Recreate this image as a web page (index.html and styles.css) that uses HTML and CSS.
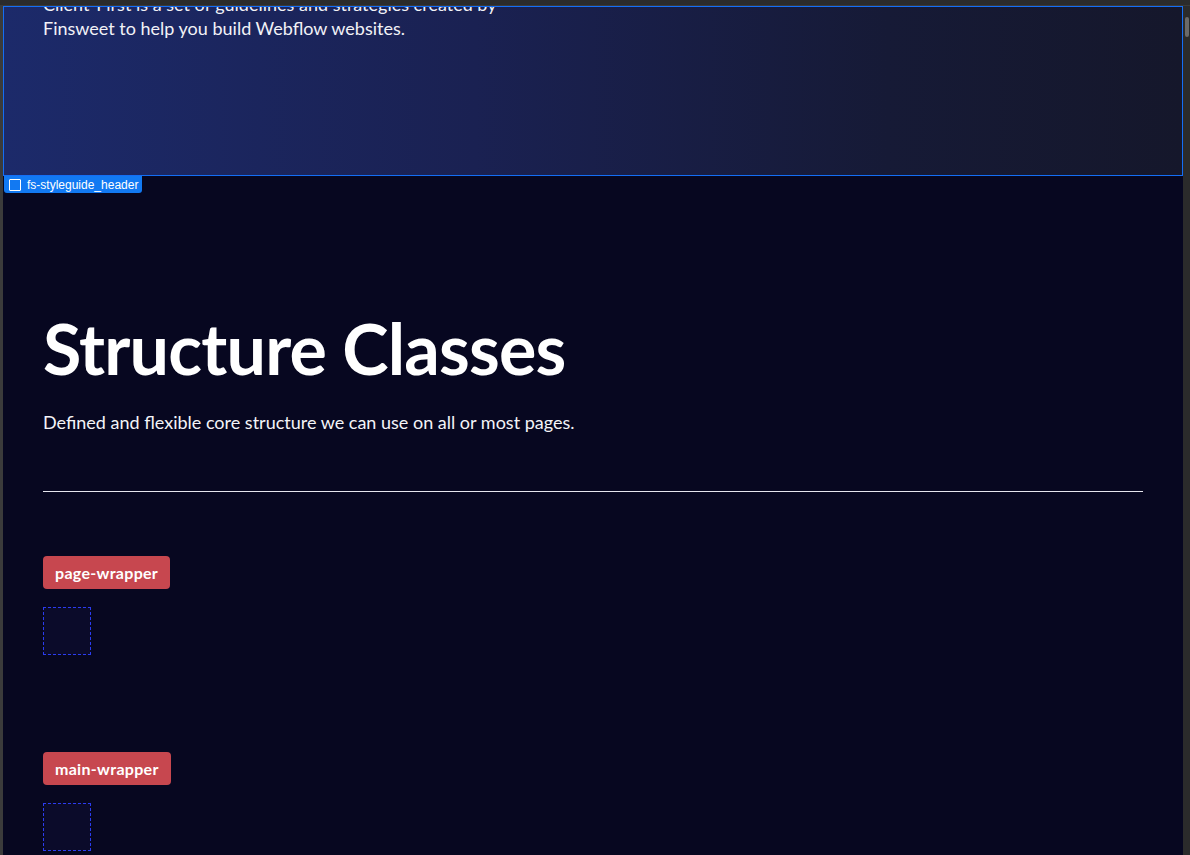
FILE: index.html
```html
<!DOCTYPE html>
<html lang="en">
<head>
<meta charset="utf-8">
<title>Structure Classes</title>
<link rel="stylesheet" href="styles.css">
</head>
<body>
<div class="app">
  <div class="topbar"></div>
  <div class="workspace">
    <div class="leftstrip"></div>
    <div class="canvas">
      <header class="sg-header">
        <div class="sg-header-text">
          <p>Client-First is a set of guidelines and strategies created by<br>Finsweet to help you build Webflow websites.</p>
        </div>
        <div class="selection-outline"></div>
        <div class="selection-label">
          <span class="sel-icon"></span>
          <span class="sel-name">fs-styleguide_header</span>
        </div>
      </header>
      <main class="sg-section">
        <h1 class="sg-title">Structure Classes</h1>
        <p class="sg-lead">Defined and flexible core structure we can use on all or most pages.</p>
        <hr class="sg-divider">
        <div class="sg-item">
          <span class="sg-tag">page-wrapper</span>
          <div class="sg-box"></div>
        </div>
        <div class="sg-item">
          <span class="sg-tag">main-wrapper</span>
          <div class="sg-box"></div>
        </div>
      </main>
    </div>
    <div class="rightstrip"><div class="thumb"></div></div>
  </div>
</div>
</body>
</html>
```

FILE: styles.css
```css
* { box-sizing: border-box; }
html, body { margin: 0; padding: 0; }
body {
  background: #2b2b2b;
  font-family: Lato, "Liberation Sans", sans-serif;
  color: #ffffff;
  overflow: hidden;
}
.app {
  width: 1190px;
  height: 855px;
  display: flex;
  flex-direction: column;
}
.topbar {
  height: 6px;
  background: #2b2b2b;
  border-bottom: 1px solid #3a3a3a;
  flex: none;
}
.workspace {
  flex: 1;
  display: flex;
  min-height: 0;
}
.leftstrip {
  width: 3px;
  background: #3b3b3b;
  flex: none;
}
.rightstrip {
  width: 7px;
  background: #2b2b2b;
  flex: none;
  padding: 11px 1px 0 2px;
}
.thumb {
  height: 20px;
  background: #6a6a6a;
  border-radius: 2px;
}
.canvas {
  flex: 1;
  background: #070720;
  overflow: hidden;
  position: relative;
}
.sg-header {
  position: relative;
  height: 170px;
  background: linear-gradient(90deg, #1c2a6a 0%, #1a2152 40%, #161a36 75%, #15172b 100%);
  padding: 0 40px;
}
.sg-header-text {
  position: relative;
  top: -14px;
}
.sg-header-text p {
  margin: 0;
  font-size: 18px;
  line-height: 24px;
  color: #f2f2f7;
}
.selection-outline {
  position: absolute;
  inset: 0;
  border: 1px solid #146ef5;
  pointer-events: none;
}
.selection-label {
  position: absolute;
  left: 1px;
  top: 170px;
  height: 17px;
  padding: 0 4px 0 5px;
  background: #1279f2;
  border-radius: 0 0 3px 3px;
  display: flex;
  align-items: center;
  gap: 6px;
  z-index: 2;
}
.sel-icon {
  width: 12px;
  height: 12px;
  border: 1.5px solid #ffffff;
  border-radius: 1px;
}
.sel-name {
  font-family: "Liberation Sans", Arial, sans-serif;
  font-size: 12px;
  color: #ffffff;
}
.sg-section {
  padding: 130px 40px 0;
}
.sg-title {
  margin: 0;
  font-size: 70px;
  line-height: 84px;
  font-weight: 700;
  letter-spacing: -0.8px;
}
.sg-lead {
  margin: 19px 0 0;
  font-size: 18px;
  line-height: 27px;
  color: #f4f4f8;
}
.sg-divider {
  margin: 55px 0 0;
  border: 0;
  border-top: 1px solid #e6e6ee;
  height: 0;
}
.sg-item {
  padding-top: 64px;
  padding-bottom: 32px;
}
.sg-item + .sg-item {
  padding-top: 65px;
}
.sg-tag {
  display: inline-block;
  background: #c7474f;
  color: #fff;
  font-weight: 700;
  font-size: 16px;
  letter-spacing: 0.3px;
  line-height: 33px;
  height: 33px;
  padding: 0 12px;
  border-radius: 4px;
}
.sg-box {
  margin-top: 18px;
  width: 48px;
  height: 48px;
  border: 1px dashed #2b3cf0;
  background: #0b0b2a;
}
```
